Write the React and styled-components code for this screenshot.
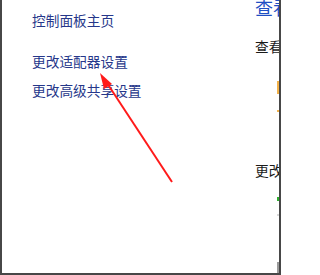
import React from 'react';
import styled, { createGlobalStyle } from 'styled-components';

const GlobalStyle = createGlobalStyle`
  html, body {
    margin: 0;
    padding: 0;
    background: #ffffff;
    overflow: hidden;
  }
  body {
    font-family: "Noto Sans CJK SC", "Noto Sans", sans-serif;
  }
`;

const sideLinks = [
  { label: '控制面板主页', gap: 0 },
  { label: '更改适配器设置', gap: 21 },
  { label: '更改高级共享设置', gap: 9 },
];

const App = () => {
  return (
    <>
      <GlobalStyle />
      <Frame>
        <Sidebar>
          {sideLinks.map((link) => (
            <SideLink key={link.label} $gap={link.gap}>
              {link.label}
            </SideLink>
          ))}
        </Sidebar>
        <Content>
          <Heading>查看</Heading>
          <Label $top={19}>查看</Label>
          <Mark $top={25} $h={13} $color="#f3b24a" />
          <Mark $top={16} $h={2} $color="#f3b24a" />
          <Label $top={48}>更改</Label>
          <Mark $top={17} $h={4} $color="#2fae2f" />
          <Mark $top={13} $h={2} $color="#d8d8d8" />
          <Mark $top={46} $h={11} $color="#9a9a9a" />
        </Content>
        <Arrow viewBox="0 0 281 275">
          <line x1="172" y1="182" x2="105" y2="80" stroke="#ff1a1a" strokeWidth="2" />
          <polygon points="100,73 112,84 104,89" fill="#ff1a1a" />
        </Arrow>
      </Frame>
    </>
  );
};

export default App;

const Frame = styled.div`
  position: relative;
  width: 281px;
  height: 275px;
  box-sizing: border-box;
  border-left: 2px solid #474747;
  border-right: 2px solid #474747;
  border-bottom: 2px solid #474747;
  display: flex;
  overflow: hidden;
`;

const Sidebar = styled.div`
  width: 253px;
  box-sizing: border-box;
  flex-shrink: 0;
  padding: 10px 0 0 30px;
  display: flex;
  flex-direction: column;
`;

const SideLink = styled.div`
  margin-top: ${(p) => p.$gap}px;
  font-size: 13.7px;
  line-height: 20px;
  color: #26378a;
  white-space: nowrap;
`;

const Content = styled.div`
  width: 24px;
  flex-shrink: 0;
  display: flex;
  flex-direction: column;
  overflow: hidden;
`;

const Heading = styled.div`
  width: 24px;
  margin-top: -3px;
  font-size: 18px;
  line-height: 20px;
  color: #1f4fc4;
  white-space: nowrap;
  overflow: hidden;
`;

const Label = styled.div`
  width: 24px;
  margin-top: ${(p) => p.$top}px;
  font-size: 13.7px;
  line-height: 20px;
  color: #1a1a1a;
  white-space: nowrap;
  overflow: hidden;
`;

const Mark = styled.div`
  margin-top: ${(p) => p.$top}px;
  margin-left: 22px;
  width: 2px;
  height: ${(p) => p.$h}px;
  background: ${(p) => p.$color};
  flex-shrink: 0;
`;

const Arrow = styled.svg`
  position: absolute;
  left: -2px;
  top: 0;
  width: 281px;
  height: 275px;
  pointer-events: none;
`;
